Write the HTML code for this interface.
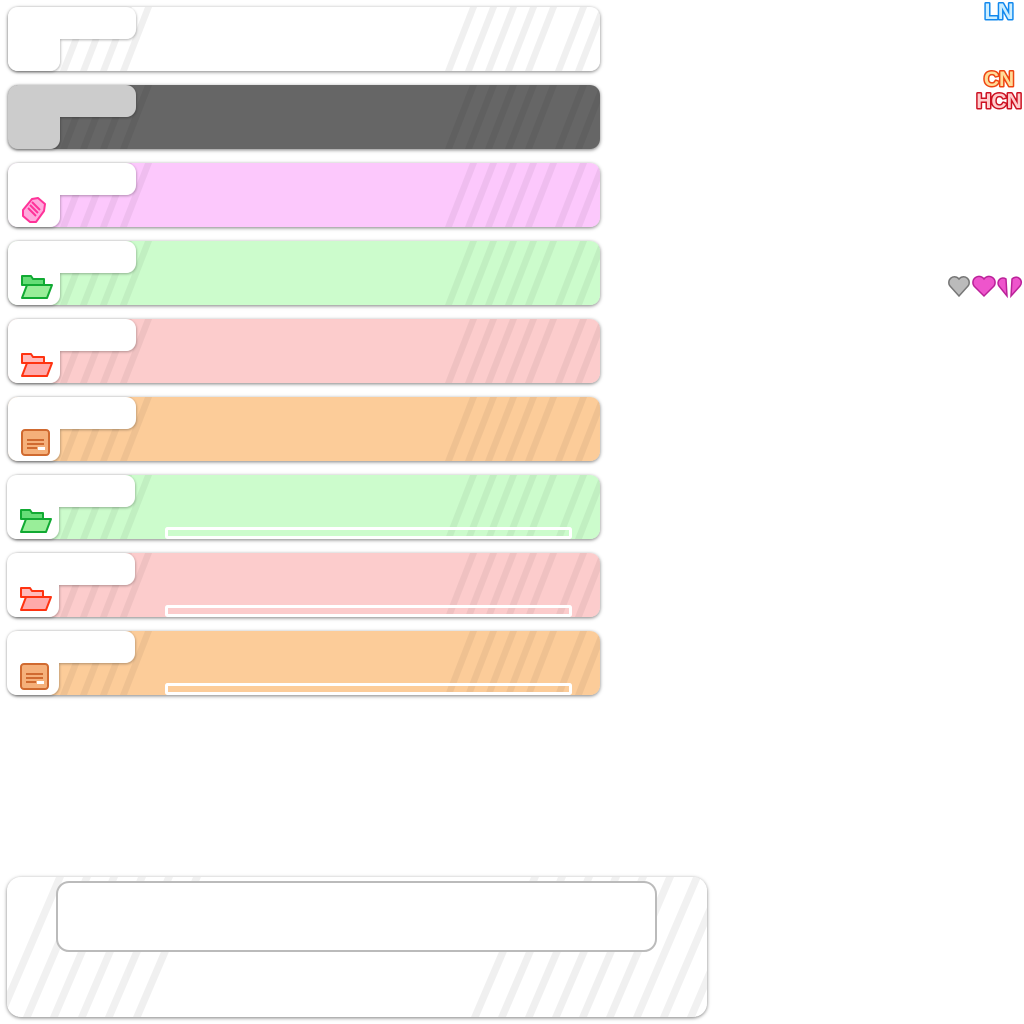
<!DOCTYPE html>
<html><head><style>
html,body{margin:0;padding:0;background:#fff;width:1024px;height:1024px;overflow:hidden}
svg{display:block}
.lbl{font-family:"Liberation Sans",sans-serif;font-weight:bold;paint-order:stroke;stroke-linejoin:round}
</style></head><body>
<svg width="1024" height="1024" viewBox="0 0 1024 1024">
<defs>
<filter id="sh" x="-5%" y="-20%" width="110%" height="140%"><feDropShadow dx="0" dy="1" stdDeviation="1.8" flood-color="#000" flood-opacity="0.5"/></filter>
<filter id="ts" x="-20%" y="-20%" width="140%" height="140%"><feDropShadow dx="0.5" dy="1" stdDeviation="1.3" flood-color="#000" flood-opacity="0.3"/></filter>
<g id="stripes">
<polygon points="60,64 67,64 92,0 85,0"/><polygon points="80,64 87,64 112,0 105,0"/><polygon points="100,64 107,64 132,0 125,0"/><polygon points="120,64 127,64 152,0 145,0"/>
<polygon points="445,64 452,64 477,0 470,0"/><polygon points="465,64 472,64 497,0 490,0"/><polygon points="485,64 492,64 517,0 510,0"/><polygon points="505,64 512,64 537,0 530,0"/><polygon points="525,64 532,64 557,0 550,0"/><polygon points="555,64 562,64 587,0 580,0"/><polygon points="575,64 582,64 607,0 600,0"/>
</g>
<clipPath id="bc"><rect x="8" y="0" width="592" height="64" rx="10"/></clipPath>
<path id="tabp" d="M18,0 H126 A10,10 0 0 1 136,10 V22 A10,10 0 0 1 126,32 H60 V54 A10,10 0 0 1 50,64 H18 A10,10 0 0 1 8,54 V10 A10,10 0 0 1 18,0 Z"/>
</defs>

<g filter="url(#sh)">
<g transform="translate(0,7)"><rect x="8" y="0" width="592" height="64" rx="10" fill="#fff"/><g clip-path="url(#bc)" fill="#000" opacity="0.06"><use href="#stripes"/></g></g>
<g transform="translate(0,85)"><rect x="8" y="0" width="592" height="64" rx="10" fill="#666"/><g clip-path="url(#bc)" fill="#000" opacity="0.06"><use href="#stripes"/></g></g>
<g transform="translate(0,163)"><rect x="8" y="0" width="592" height="64" rx="10" fill="#fcc8fc"/><g clip-path="url(#bc)" fill="#000" opacity="0.05"><use href="#stripes"/></g></g>
<g transform="translate(0,241)"><rect x="8" y="0" width="592" height="64" rx="10" fill="#ccfccc"/><g clip-path="url(#bc)" fill="#000" opacity="0.05"><use href="#stripes"/></g></g>
<g transform="translate(0,319)"><rect x="8" y="0" width="592" height="64" rx="10" fill="#fccccc"/><g clip-path="url(#bc)" fill="#000" opacity="0.05"><use href="#stripes"/></g></g>
<g transform="translate(0,397)"><rect x="8" y="0" width="592" height="64" rx="10" fill="#fccc99"/><g clip-path="url(#bc)" fill="#000" opacity="0.05"><use href="#stripes"/></g></g>
<g transform="translate(0,475)"><rect x="8" y="0" width="592" height="64" rx="10" fill="#ccfccc"/><g clip-path="url(#bc)" fill="#000" opacity="0.05"><use href="#stripes"/></g></g>
<g transform="translate(0,553)"><rect x="8" y="0" width="592" height="64" rx="10" fill="#fccccc"/><g clip-path="url(#bc)" fill="#000" opacity="0.05"><use href="#stripes"/></g></g>
<g transform="translate(0,631)"><rect x="8" y="0" width="592" height="64" rx="10" fill="#fccc99"/><g clip-path="url(#bc)" fill="#000" opacity="0.05"><use href="#stripes"/></g></g>
</g>
<g filter="url(#ts)" fill="#fff">
<use href="#tabp" transform="translate(0,7)"/>
<use href="#tabp" transform="translate(0,85)" fill="#ccc"/>
<use href="#tabp" transform="translate(0,163)"/>
<use href="#tabp" transform="translate(0,241)"/>
<use href="#tabp" transform="translate(0,319)"/>
<use href="#tabp" transform="translate(0,397)"/>
<use href="#tabp" transform="translate(-1,475)"/>
<use href="#tabp" transform="translate(-1,553)"/>
<use href="#tabp" transform="translate(-1,631)"/>
</g>

<rect x="166.5" y="528.5" width="404" height="9" fill="none" stroke="#fff" stroke-width="3" rx="1"/>
<rect x="166.5" y="606.5" width="404" height="9" fill="none" stroke="#fff" stroke-width="3" rx="1"/>
<rect x="166.5" y="684.5" width="404" height="9" fill="none" stroke="#fff" stroke-width="3" rx="1"/>

<g transform="translate(22,196)" fill="#ffaadd" stroke="#ff3399" stroke-width="2" stroke-linejoin="round"><path d="M1,14 L10,3 L16,2 L23,8 L22,15 L14,26 L8,26 L1,20 Z"/><path d="M6,12 L14,20 M8,9 L16,17 M10,6 L18,14" fill="none"/></g>
<g fill="#99ee99" stroke="#11aa33" stroke-width="2" stroke-linejoin="round"><path d="M22,276 h9 l2,3 h11 v6 h-22 z" fill="#66dd77"/><path d="M22,298 l5,-13 h25 l-5,13 z"/></g>
<g fill="#ffaaaa" stroke="#ff3311" stroke-width="2" stroke-linejoin="round"><path d="M22,354 h9 l2,3 h11 v6 h-22 z" fill="#ffbbbb"/><path d="M22,376 l5,-13 h25 l-5,13 z"/></g>
<g fill="#f5b07a" stroke="#d06a30" stroke-width="2"><rect x="22" y="430" width="27" height="25" rx="3"/><path d="M27,440 h17 M27,444 h17 M27,448 h10" fill="none"/><rect x="38" y="447" width="7" height="3" fill="#fff" stroke="none"/></g>
<g fill="#99ee99" stroke="#11aa33" stroke-width="2" stroke-linejoin="round"><path d="M21,510 h9 l2,3 h11 v6 h-22 z" fill="#66dd77"/><path d="M21,532 l5,-13 h25 l-5,13 z"/></g>
<g fill="#ffaaaa" stroke="#ff3311" stroke-width="2" stroke-linejoin="round"><path d="M21,588 h9 l2,3 h11 v6 h-22 z" fill="#ffbbbb"/><path d="M21,610 l5,-13 h25 l-5,13 z"/></g>
<g fill="#f5b07a" stroke="#d06a30" stroke-width="2"><rect x="21" y="664" width="27" height="25" rx="3"/><path d="M26,674 h17 M26,678 h17 M26,682 h10" fill="none"/><rect x="37" y="681" width="7" height="3" fill="#fff" stroke="none"/></g>

<clipPath id="pc"><rect x="7" y="877" width="700" height="140" rx="14"/></clipPath>
<g filter="url(#sh)"><rect x="7" y="877" width="700" height="140" rx="14" fill="#fff"/></g>
<g clip-path="url(#pc)" fill="#000" opacity="0.055">
<polygon points="-4,1017 4,1017 64,877 56,877"/><polygon points="23,1017 31,1017 91,877 83,877"/><polygon points="50,1017 58,1017 118,877 110,877"/><polygon points="78,1017 86,1017 146,877 138,877"/><polygon points="105,1017 113,1017 173,877 165,877"/><polygon points="133,1017 141,1017 201,877 193,877"/>
<polygon points="471,1017 479,1017 539,877 531,877"/><polygon points="498,1017 506,1017 566,877 558,877"/><polygon points="525,1017 533,1017 593,877 585,877"/><polygon points="552,1017 560,1017 620,877 612,877"/><polygon points="579,1017 587,1017 647,877 639,877"/><polygon points="606,1017 614,1017 674,877 666,877"/><polygon points="633,1017 641,1017 701,877 693,877"/><polygon points="660,1017 668,1017 728,877 720,877"/><polygon points="687,1017 695,1017 755,877 747,877"/>
</g>
<rect x="57" y="882" width="599" height="69" rx="12" fill="#fff" stroke="#bbb" stroke-width="2"/>

<text x="999" y="19" class="lbl" font-size="22" fill="#cceeff" stroke="#1188ee" stroke-width="3" text-anchor="middle">LN</text>
<text x="999" y="86" class="lbl" font-size="21" fill="#ffdd99" stroke="#ee4411" stroke-width="3" text-anchor="middle">CN</text>
<text x="999" y="108" class="lbl" font-size="21" fill="#ffcccc" stroke="#cc1122" stroke-width="3" text-anchor="middle">HCN</text>

<path d="M959,296 l-9,-10 a5,5 0 0 1 9,-7 a5,5 0 0 1 9,7 z" fill="#bbb" stroke="#777" stroke-width="1.5"/>
<path d="M984,296 l-10,-10 a5.5,5.5 0 0 1 10,-7 a5.5,5.5 0 0 1 10,7 z" fill="#ee55cc" stroke="#bb2299" stroke-width="1.5"/>
<path d="M1007,296 l-8,-10 a5,5 0 0 1 7,-7 z M1011,296 l1,-17 a5,5 0 0 1 8,7 z" fill="#ee55cc" stroke="#bb2299" stroke-width="1.5"/>
</svg>
</body></html>
